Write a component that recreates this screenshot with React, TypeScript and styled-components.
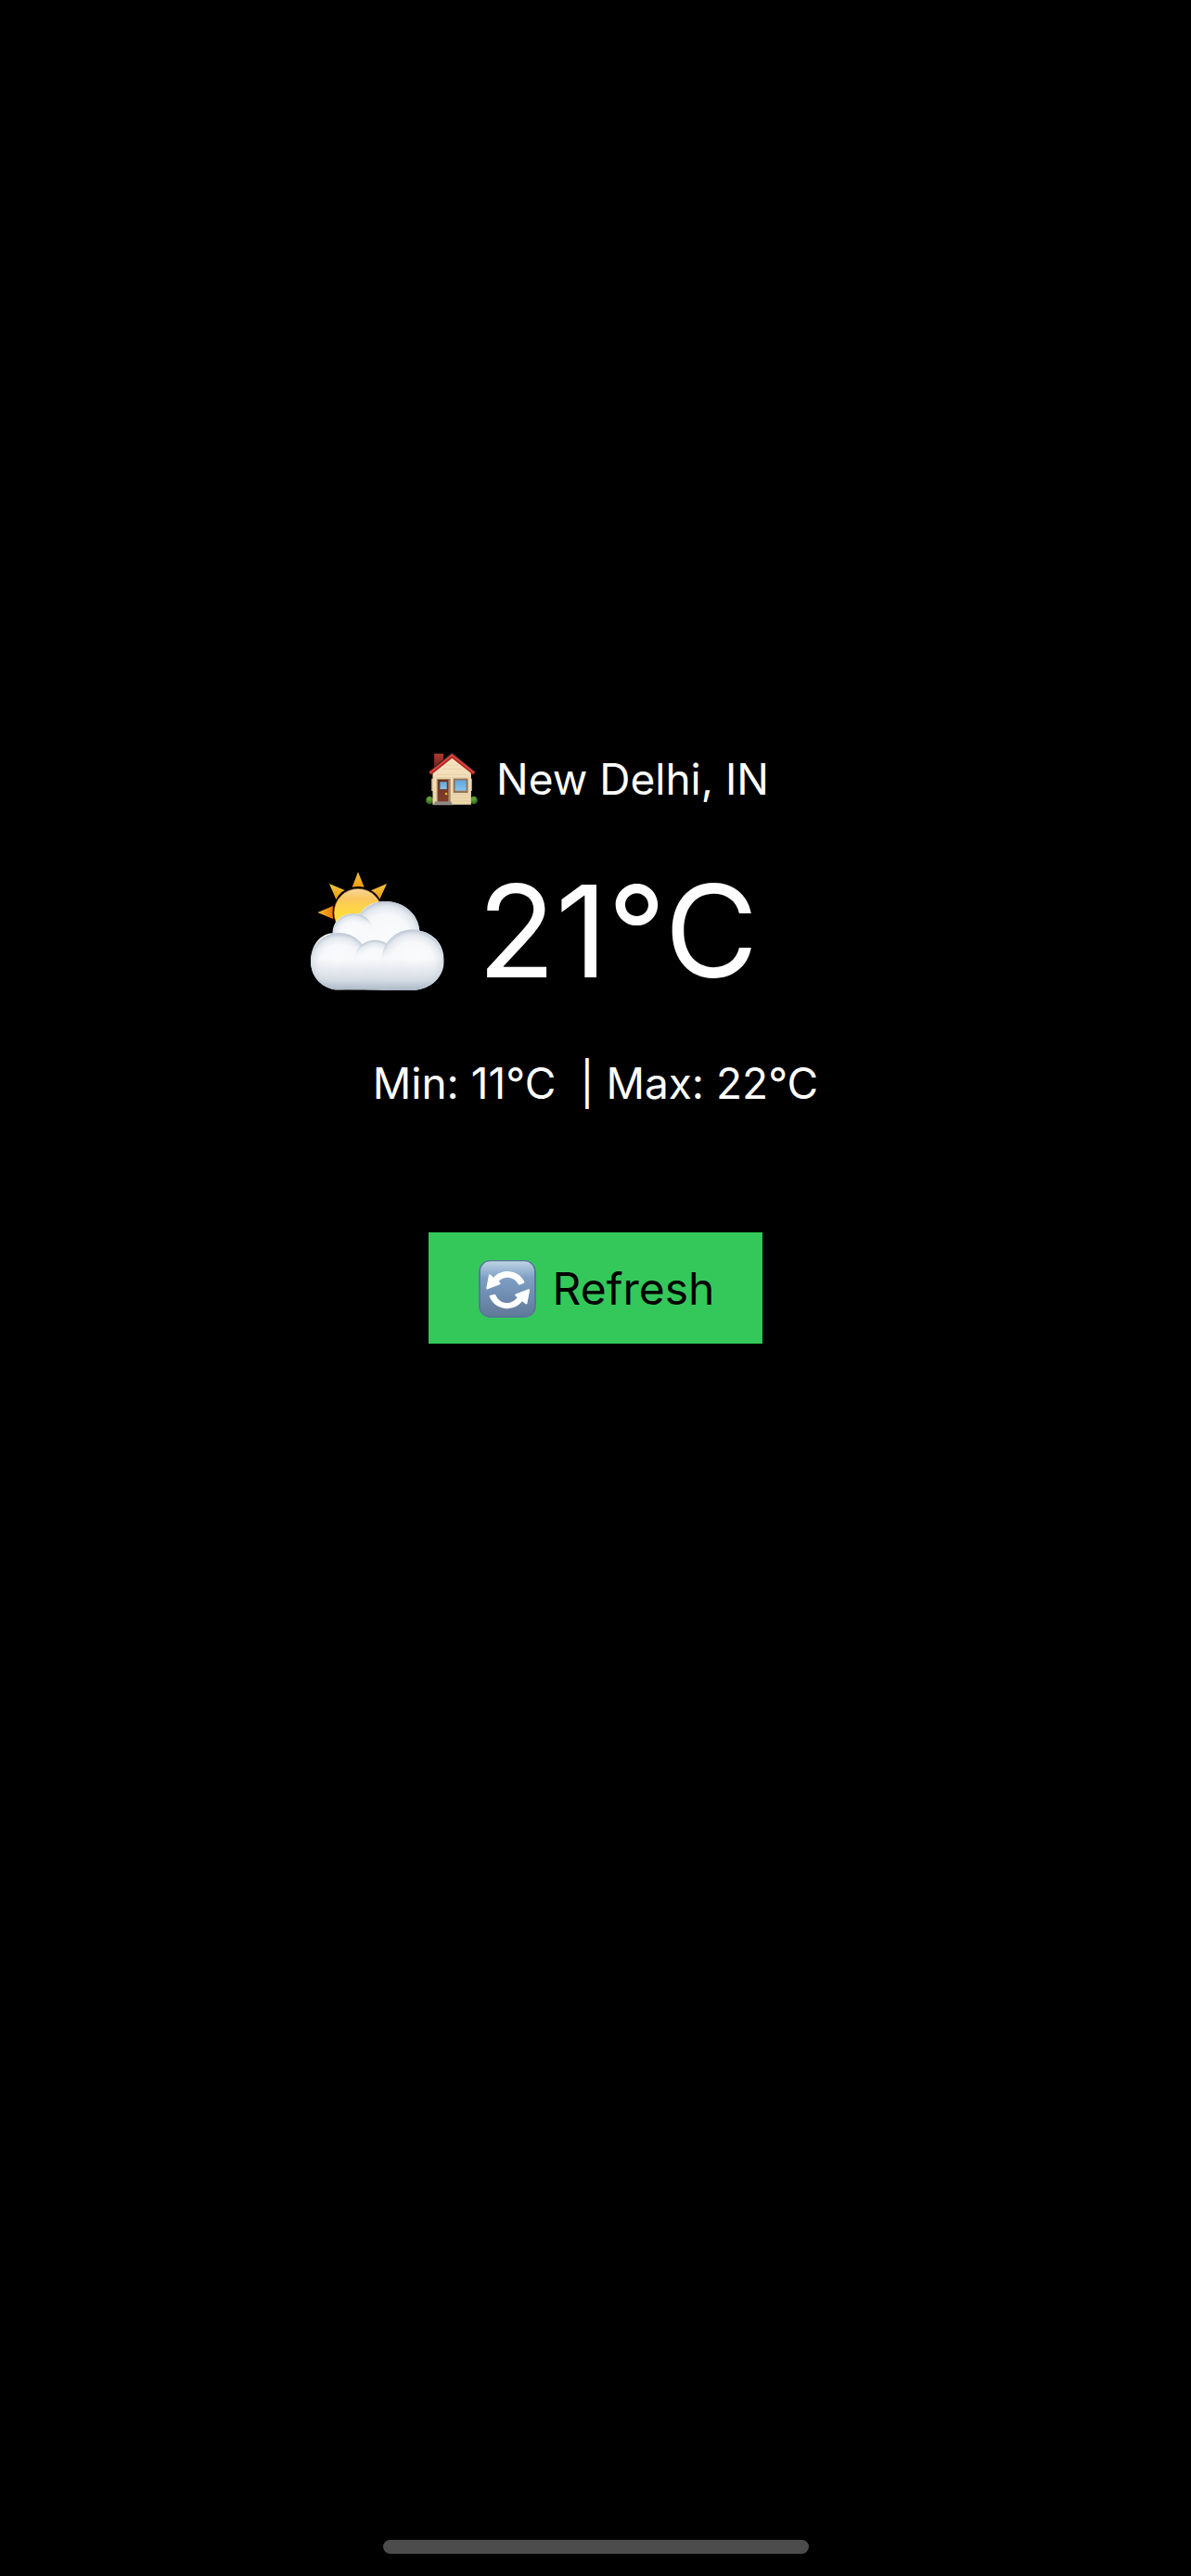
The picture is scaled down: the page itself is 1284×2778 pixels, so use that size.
import React from "react";
import styled, { createGlobalStyle } from "styled-components";

const GlobalStyle = createGlobalStyle`
  *, *::before, *::after { box-sizing: border-box; }
  body {
    margin: 0;
    background: #000;
    color: #fff;
    font-family: Inter, "Liberation Sans", sans-serif;
  }
`;

const Screen = styled.div`
  display: flex;
  flex-direction: column;
  align-items: center;
  min-height: 100vh;
`;

const Weather = styled.main`
  flex: 1;
  display: flex;
  flex-direction: column;
  align-items: center;
  padding-top: 810px;
`;

const Place = styled.h1`
  display: flex;
  align-items: center;
  gap: 20px;
  margin: 0;
  padding-left: 4px;
  font-size: 46px;
  line-height: 60px;
  font-weight: 400;
`;

const Current = styled.p`
  display: flex;
  align-items: center;
  gap: 36px;
  margin: 48px 0 0;
  padding-right: 132px;
  font-size: 138px;
  line-height: 172px;
`;

const Range = styled.p`
  margin: 48px 0 0;
  font-size: 46px;
  line-height: 60px;
  white-space: pre;
`;

const RefreshButton = styled.button`
  display: flex;
  align-items: center;
  gap: 18px;
  margin-top: 131px;
  padding: 30px 52px 28px 54px;
  border: 0;
  background: #34c85a;
  color: #000;
  font-family: inherit;
  font-size: 48px;
  line-height: 62px;
  cursor: pointer;
`;

const HomeArea = styled.footer`
  width: 100%;
  padding: 24px;
`;

const HomeIndicator = styled.div`
  width: 40%;
  max-width: 459px;
  height: 15px;
  margin: 0 auto;
  border-radius: 8px;
  background: #4c4c4c;
`;

function HouseIcon() {
  return (
    <svg width="56" height="57" viewBox="30 36 168 172" aria-hidden="true">
      <defs>
        <linearGradient id="wall" x1="0" y1="0" x2="0" y2="1">
          <stop offset="0" stopColor="#f6e3c2" />
          <stop offset="1" stopColor="#ecd6ab" />
        </linearGradient>
        <linearGradient id="chimney" x1="0" y1="0" x2="0" y2="1">
          <stop offset="0" stopColor="#b03a30" />
          <stop offset="1" stopColor="#6b1713" />
        </linearGradient>
        <linearGradient id="glass" x1="0" y1="0" x2="0" y2="1">
          <stop offset="0" stopColor="#62a5dc" />
          <stop offset="1" stopColor="#86c3ea" />
        </linearGradient>
        <linearGradient id="door" x1="0" y1="0" x2="0" y2="1">
          <stop offset="0" stopColor="#6d2f1d" />
          <stop offset="1" stopColor="#823d29" />
        </linearGradient>
        <radialGradient id="bush" cx=".45" cy=".3" r=".7">
          <stop offset="0" stopColor="#6fae42" />
          <stop offset="1" stopColor="#2c5f1b" />
        </radialGradient>
      </defs>
      <ellipse cx="42" cy="190" rx="12" ry="13" fill="url(#bush)" />
      <ellipse cx="186" cy="190" rx="12" ry="13" fill="url(#bush)" />
      <path d="M57 38H87V70L57 94Z" fill="url(#chimney)" />
      <path d="M48 120H180V160H48Z" fill="#c9ad83" />
      <path d="M52 98L115 48L177 98V204H52Z" fill="url(#wall)" />
      <path d="M62 106H168M54 116H176M54 166H66M110 172H176M110 182H176M118 192H176M82 88H150M96 76H136" stroke="#dcc498" strokeWidth="1.5" />
      <path d="M44 98L115 38L186 98" fill="none" stroke="#232326" strokeWidth="8" />
      <path d="M43 103L115 46L187 103" fill="none" stroke="#a82521" strokeWidth="11" />
      <path d="M43 101L115 43L187 101" fill="none" stroke="#e1433b" strokeWidth="6" />
      <path d="M65 120H110V198H65Z" fill="#a78665" />
      <path d="M69 123H103V198H69Z" fill="url(#door)" />
      <path d="M76 130H98V154H76Z" fill="url(#glass)" />
      <circle cx="96" cy="169" r="4" fill="#f0b33c" />
      <path d="M119 119H167V166H119Z" fill="#947358" />
      <path d="M125 125H161V159H125Z" fill="url(#glass)" />
      <path d="M60 194H112L117 206H54Z" fill="#8f8986" />
    </svg>
  );
}

function CloudySunIcon() {
  return (
    <svg width="144" height="129" viewBox="30 33 432 387" aria-hidden="true">
      <defs>
        <linearGradient id="sun" x1="0" y1="0" x2="0" y2="1">
          <stop offset="0" stopColor="#f8d7a0" />
          <stop offset=".2" stopColor="#fac75e" />
          <stop offset=".55" stopColor="#ffdc3c" />
          <stop offset="1" stopColor="#ffe94a" />
        </linearGradient>
        <linearGradient id="ray" x1="0" y1="0" x2="0" y2="1">
          <stop offset="0" stopColor="#edc746" />
          <stop offset="1" stopColor="#f49a0c" />
        </linearGradient>
        <linearGradient id="sideRay" x1="0" y1="0" x2="1" y2="0">
          <stop offset="0" stopColor="#edbd35" />
          <stop offset="1" stopColor="#ee7a08" />
        </linearGradient>
        <radialGradient id="puff" cx=".5" cy=".55" r=".54">
          <stop offset="0" stopColor="#fbfcfd" />
          <stop offset=".65" stopColor="#f6f8fa" />
          <stop offset=".87" stopColor="#e3e8ee" />
          <stop offset="1" stopColor="#bec9d5" />
        </radialGradient>
        <linearGradient id="base" x1="0" y1="0" x2="0" y2="1">
          <stop offset=".45" stopColor="#b5c1ce" stopOpacity="0" />
          <stop offset=".8" stopColor="#b5c1ce" stopOpacity=".5" />
          <stop offset="1" stopColor="#a6b4c3" stopOpacity="1" />
        </linearGradient>
        <radialGradient id="blend">
          <stop offset="0" stopColor="#fafbfc" />
          <stop offset=".6" stopColor="#f8f9fb" stopOpacity=".9" />
          <stop offset="1" stopColor="#f6f8fa" stopOpacity="0" />
        </radialGradient>
        <clipPath id="cloudAll">
          <path d="M30 323C30 272 60 234 101 232C101 188 140 160 188 170C205 142 238 128 274 129C330 130 378 168 382 224C430 232 461 270 461 322C461 374 420 414 360 417C270 418 200 413 118 415C70 413 30 376 30 323Z" />
        </clipPath>
      </defs>
      <circle cx="183" cy="166" r="78" fill="url(#sun)" stroke="#7a4a04" strokeWidth="2" />
      <path d="M183 34L203 83Q183 79 164 83Z" fill="url(#ray)" />
      <path d="M90 72L140 93Q122 103 112 123Z" fill="url(#ray)" />
      <path d="M276 72L225 94Q243 103 253 122Z" fill="url(#ray)" />
      <path d="M52 165L102 144Q99 165 102 186Z" fill="url(#sideRay)" />
      <g clipPath="url(#cloudAll)">
        <path d="M28 128H464V420H28Z" fill="#f3f5f8" />
        <circle cx="274" cy="238" r="110" fill="url(#puff)" />
        <circle cx="168" cy="235" r="67" fill="url(#puff)" />
        <ellipse cx="225" cy="240" rx="62" ry="58" fill="url(#blend)" />
        <circle cx="122" cy="324" r="93" fill="url(#puff)" />
        <circle cx="238" cy="322" r="68" fill="url(#puff)" />
        <circle cx="359" cy="320" r="100" fill="url(#puff)" />
        <ellipse cx="181" cy="350" rx="66" ry="80" fill="url(#blend)" />
        <ellipse cx="280" cy="358" rx="76" ry="80" fill="url(#blend)" />
        <path d="M28 230H464V420H28Z" fill="url(#base)" />
      </g>
    </svg>
  );
}

function RefreshIcon() {
  return (
    <svg width="62" height="62" viewBox="33 27 186 186" aria-hidden="true">
      <defs>
        <linearGradient id="tile" x1="0" y1="0" x2="0" y2="1">
          <stop offset="0" stopColor="#bdd2e5" />
          <stop offset=".13" stopColor="#a2bdd7" />
          <stop offset=".3" stopColor="#7e9fc5" />
          <stop offset=".65" stopColor="#6e8caf" />
          <stop offset="1" stopColor="#607a99" />
        </linearGradient>
      </defs>
      <rect x="33" y="27" width="186" height="186" rx="38" fill="#587799" />
      <rect x="39" y="31" width="174" height="176" rx="32" fill="url(#tile)" />
      <g fill="#fff">
        <path d="M66 74Q69 71 73 75L81 83C108 53 161 57 181 97Q182 100 179 101L165 107Q162 107 160 103C147 80 116 77 98 95L103 100Q105 104 101 106L62 121Q57 122 58 117Z" />
        <path d="M190 168Q187 171 183 167L174 160C146 195 88 192 68 145Q67 142 70 141L84 137Q87 137 89 141C100 169 139 175 158 147L151 142Q150 138 154 136L194 121Q199 120 198 125Z" />
      </g>
    </svg>
  );
}

export default function App() {
  return (
    <Screen>
      <GlobalStyle />
      <Weather>
        <Place>
          <HouseIcon />
          New Delhi, IN
        </Place>
        <Current>
          <CloudySunIcon />
          21°C
        </Current>
        <Range>{"Min: 11°C  | Max: 22°C"}</Range>
        <RefreshButton type="button">
          <RefreshIcon />
          Refresh
        </RefreshButton>
      </Weather>
      <HomeArea>
        <HomeIndicator />
      </HomeArea>
    </Screen>
  );
}
